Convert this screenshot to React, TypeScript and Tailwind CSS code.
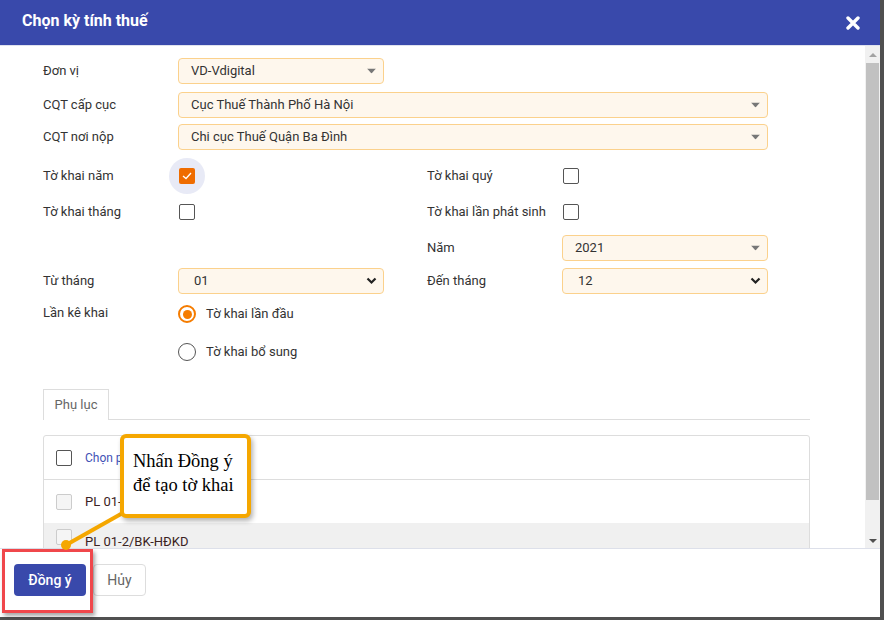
import React from 'react';

const font = { fontFamily: 'Roboto, "Noto Sans", sans-serif' };

const Caret: React.FC = () => (
    <svg width="9" height="5" viewBox="0 0 9 5" className="absolute right-[7px] top-1/2 -translate-y-1/2">
        <path d="M0 0 L9 0 L4.5 5 Z" fill="#777" />
    </svg>
);

const Chevron: React.FC = () => (
    <svg width="11" height="8" viewBox="0 0 11 8" className="absolute right-[6px] top-1/2 -translate-y-1/2">
        <path d="M1.5 1.5 L5.5 5.5 L9.5 1.5" fill="none" stroke="#222" strokeWidth="2.2" />
    </svg>
);

const Select: React.FC<{ value: string; wide?: boolean; chevron?: boolean }> = ({ value, wide, chevron }) => (
    <div
        className={`relative h-[26px] ${wide ? 'w-[590px]' : 'w-[206px]'} rounded-[4px] border border-[#fbd18c] bg-[#fef7ed] flex items-center text-[13px] text-[#333] ${chevron ? 'pl-[15px]' : 'pl-[12px]'}`}
    >
        {value}
        {chevron ? <Chevron /> : <Caret />}
    </div>
);

const Box: React.FC<{ checked?: boolean; disabled?: boolean }> = ({ checked, disabled }) => {
    if (checked) {
        return (
            <div className="relative w-[16px] h-[16px] flex items-center justify-center">
                <div className="absolute w-[36px] h-[36px] rounded-full bg-[#e8eaf6]" />
                <div className="relative w-[16px] h-[16px] rounded-[2px] bg-[#ef6c00] flex items-center justify-center">
                    <svg width="10" height="8" viewBox="0 0 10 8">
                        <path d="M1 4 L4 6.5 L9 1" fill="none" stroke="#fff" strokeWidth="1.3" />
                    </svg>
                </div>
            </div>
        );
    }
    return (
        <div
            className={`shrink-0 w-[16px] h-[16px] rounded-[2px] border-[1.5px] ${disabled ? 'border-[#ccc] bg-[#f5f5f5]' : 'border-[#555] bg-white'}`}
        />
    );
};

const Radio: React.FC<{ checked?: boolean; label: string }> = ({ checked, label }) => (
    <div className="flex items-center gap-[10px]">
        <div
            className={`w-[18px] h-[18px] rounded-full flex items-center justify-center ${checked ? 'border-2 border-[#f57c00]' : 'border-[1.5px] border-[#555]'}`}
        >
            {checked && <div className="w-[9px] h-[9px] rounded-full bg-[#f57c00]" />}
        </div>
        <span className="text-[13px] text-[#333]">{label}</span>
    </div>
);

const Label: React.FC<{ children: React.ReactNode }> = ({ children }) => (
    <div className="w-[135px] shrink-0 text-[13px] text-[#333]">{children}</div>
);

const App: React.FC = () => {
    return (
        <div className="w-[884px] h-[620px] bg-[#505050] overflow-hidden" style={font}>
            <div className="relative w-[880px] h-[617px] bg-white flex flex-col">
                {/* Header */}
                <div className="h-[46px] shrink-0 bg-[#3949ab] flex items-center justify-between pl-[22px] pr-[20px] border-b border-[#dfe2ee]">
                    <span className="text-white text-[16px] font-bold -mt-[3px]">Chọn kỳ tính thuế</span>
                    <svg width="14" height="14" viewBox="0 0 14 14">
                        <path d="M2 2 L12 12 M12 2 L2 12" stroke="#fff" strokeWidth="3.4" strokeLinecap="round" />
                    </svg>
                </div>

                {/* Body */}
                <div className="h-[503px] shrink-0 flex border-b border-[#dde0ea] overflow-hidden">
                    <div className="w-[865px] shrink-0 pl-[43px] pt-[12px]">
                        <div className="flex items-center h-[26px]">
                            <Label>Đơn vị</Label>
                            <Select value="VD-Vdigital" />
                        </div>
                        <div className="flex items-center h-[26px] mt-[8px]">
                            <Label>CQT cấp cục</Label>
                            <Select value="Cục Thuế Thành Phố Hà Nội" wide />
                        </div>
                        <div className="flex items-center h-[26px] mt-[6px]">
                            <Label>CQT nơi nộp</Label>
                            <Select value="Chi cục Thuế Quận Ba Đình" wide />
                        </div>

                        <div className="flex items-center h-[36px] mt-[8px]">
                            <Label>Tờ khai năm</Label>
                            <div className="w-[206px] pl-[1px]"><Box checked /></div>
                            <div className="w-[43px]" />
                            <Label>Tờ khai quý</Label>
                            <div className="pl-[1px]"><Box /></div>
                        </div>
                        <div className="flex items-center h-[36px]">
                            <Label>Tờ khai tháng</Label>
                            <div className="w-[206px] pl-[1px]"><Box /></div>
                            <div className="w-[43px]" />
                            <Label>Tờ khai lần phát sinh</Label>
                            <div className="pl-[1px]"><Box /></div>
                        </div>
                        <div className="flex items-center h-[26px] mt-[5px]">
                            <div className="w-[384px]" />
                            <Label>Năm</Label>
                            <Select value="2021" />
                        </div>
                        <div className="flex items-center h-[26px] mt-[7px]">
                            <Label>Từ tháng</Label>
                            <Select value="01" chevron />
                            <div className="w-[43px]" />
                            <Label>Đến tháng</Label>
                            <Select value="12" chevron />
                        </div>
                        <div className="flex h-[26px] mt-[7px] items-center">
                            <div className="w-[135px] text-[13px] text-[#333] -mt-[3px]">Lần kê khai</div>
                            <Radio checked label="Tờ khai lần đầu" />
                        </div>
                        <div className="flex h-[26px] mt-[12px] items-center">
                            <div className="w-[135px]" />
                            <Radio label="Tờ khai bổ sung" />
                        </div>

                        {/* Tabs */}
                        <div className="mt-[24px] w-[767px] flex border-b border-[#ddd]">
                            <div className="h-[31px] w-[66px] border border-b-0 border-[#ddd] flex items-center justify-center text-[13px] text-[#666] -mb-px bg-white">
                                Phụ lục
                            </div>
                        </div>

                        {/* Table */}
                        <div className="mt-[15px] w-[767px] border border-[#ddd] rounded-t-[3px]">
                            <div className="h-[44px] flex items-center pl-[12px] border-b border-[#ddd]">
                                <Box />
                                <span className="ml-[13px] text-[12px] text-[#3f51b5]">Chọn phụ lục</span>
                            </div>
                            <div className="h-[43px] flex items-center pl-[12px]">
                                <Box disabled />
                                <span className="ml-[13px] text-[13px] text-[#3a2323]">PL 01-1/BK-HĐKD</span>
                            </div>
                            <div className="h-[40px] flex items-start pl-[12px] bg-[#f0f0f0] pt-[6px]">
                                <Box disabled />
                                <span className="ml-[13px] mt-[3px] text-[13px] text-[#3a2323]">PL 01-2/BK-HĐKD</span>
                            </div>
                        </div>
                    </div>

                    {/* Scrollbar */}
                    <div className="w-[15px] shrink-0 bg-[#f1f1f1] flex flex-col items-center">
                        <div className="h-[17px] flex items-center justify-center">
                            <svg width="8" height="4" viewBox="0 0 8 4"><path d="M0 4 L8 4 L4 0 Z" fill="#a3a3a3" /></svg>
                        </div>
                        <div className="w-[13px] h-[437px] bg-[#c1c1c1]" />
                        <div className="flex-1 flex items-end justify-center pb-[5px]">
                            <svg width="8" height="4" viewBox="0 0 8 4"><path d="M0 0 L8 0 L4 4 Z" fill="#505050" /></svg>
                        </div>
                    </div>
                </div>

                {/* Footer */}
                <div className="flex-1 flex items-start gap-[7px] pl-[14px] pt-[15px]">
                    <button className="h-[32px] w-[72px] rounded-[4px] bg-[#3949ab] text-white text-[14px] font-medium">Đồng ý</button>
                    <button className="h-[32px] w-[53px] rounded-[4px] border border-[#ddd] bg-white text-[#666] text-[14px]">Hủy</button>
                </div>

                {/* Red highlight */}
                <div className="absolute left-[2px] top-[549px] w-[91px] h-[64px] border-[3px] border-[#f0474b] shadow-[2px_3px_4px_rgba(0,0,0,0.35)]" />

                {/* Callout pointer */}
                <svg className="absolute left-0 top-0 pointer-events-none" width="880" height="617">
                    <line x1="128" y1="510" x2="66" y2="545" stroke="#f5a700" strokeWidth="4" />
                    <circle cx="66" cy="545" r="5" fill="#f5a700" />
                </svg>

                {/* Callout */}
                <div className="absolute left-[120px] top-[434px] w-[131px] h-[84px] rounded-[6px] border-[4px] border-[#f5a700] bg-white shadow-[2px_3px_5px_rgba(0,0,0,0.3)] pl-[9px] pt-[11px] text-[18.5px] leading-[24px] text-black" style={{ fontFamily: '"Liberation Serif", serif' }}>
                    Nhấn Đồng ý<br />để tạo tờ khai
                </div>
            </div>
        </div>
    );
};

export default App;
